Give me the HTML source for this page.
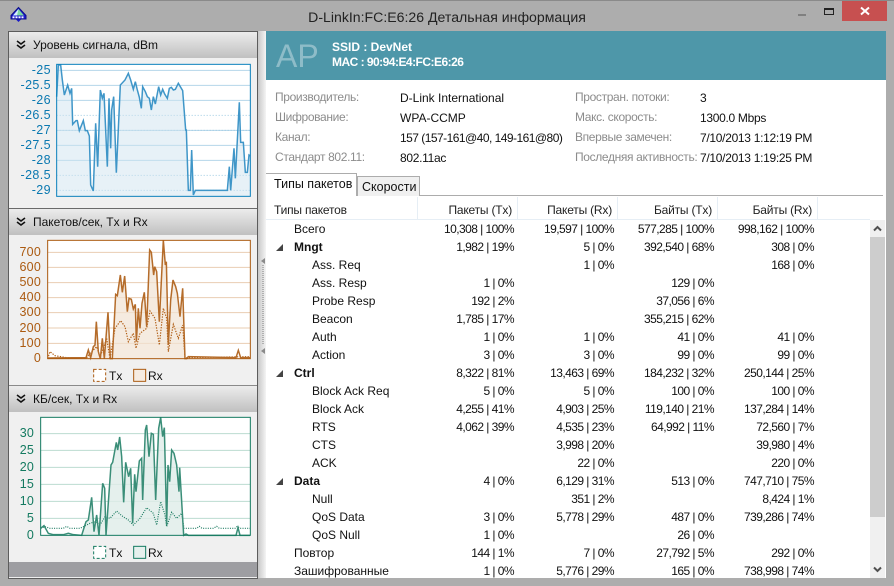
<!DOCTYPE html>
<html><head><meta charset="utf-8"><style>
html,body{margin:0;padding:0}
body{width:894px;height:586px;position:relative;overflow:hidden;background:#adadad;font:12px "Liberation Sans","DejaVu Sans",sans-serif;color:#111}
.a{position:absolute;white-space:nowrap}
.hd{position:absolute;left:9px;width:248px;height:26px;background:linear-gradient(#ececec,#c0c0c0)}
.hd span{position:absolute;left:24px;top:6px;font-size:12px;color:#111;white-space:nowrap}
.hd svg{position:absolute;left:7px;top:8px}
.lab{color:#8c8c8c;position:absolute;white-space:nowrap;font-size:12px;letter-spacing:-.35px}
.val{color:#111;position:absolute;white-space:nowrap;font-size:12px}
.row{position:absolute;left:266px;width:604px;height:18px;line-height:18px}
.row i{font-style:normal;position:absolute;top:0;white-space:nowrap}
.n0{left:28px}.n1{left:46px}.b{font-weight:bold}
.t1,.t2,.t3,.t4{letter-spacing:-.55px;width:120px;text-align:right}
.t1{left:128px}
.t2{left:228px}
.t3{left:328px}
.t4{left:428px}
.tri{position:absolute;left:10px;top:6px;width:0;height:0;border-left:7px solid transparent;border-bottom:7px solid #444}
.th{position:absolute;top:203px;white-space:nowrap;color:#222;letter-spacing:-.2px}
.sep{position:absolute;top:197px;width:1px;height:22px;background:#e6eef5}
</style></head><body>
<div class="a" style="left:0;top:0;width:894px;height:1px;background:#8a8a8a"></div>
<svg class="a" style="left:9px;top:6px" width="19" height="18" viewBox="0 0 19 18"><path d="M9.500 1.500L17 9.500V13H2V9.500Z" fill="#1a1ad0" stroke="#10108a" stroke-width="1"/><path d="M9.500 3L15 9.500H4Z" fill="#7fd8a0"/><path d="M9.500 3L4 9.500H8Z" fill="#d8ecff"/><path d="M3.500 11.300h12" stroke="#fff" stroke-width="1.800" stroke-dasharray="2 1"/><path d="M7 13.500h5l-2.500 2.500z" fill="#1a1ac8"/></svg>
<div class="a" style="left:0;top:8px;width:894px;text-align:center;font-size:14.100px;color:#222;line-height:18px">D-LinkIn:FC:E6:26 Детальная информация</div>
<div class="a" style="left:798px;top:14px;width:8px;height:2px;background:#808080"></div>
<div class="a" style="left:824px;top:8px;width:8px;height:4px;border:1.500px solid #222;border-top-width:2.500px"></div>
<div class="a" style="left:842px;top:1px;width:45px;height:20px;background:#c75050"></div>
<svg class="a" style="left:860px;top:6px" width="10" height="10"><path d="M1 1.500L9 8.500M9 1.500L1 8.500" stroke="#fff" stroke-width="2"/></svg>

<!-- left panel -->
<div class="a" style="left:8px;top:31px;width:248px;height:546px;border:1px solid #5c5c5c;background:#f0f0f0"></div>
<div class="a" style="left:9px;top:562px;width:248px;height:15px;background:#9e9ea2"></div>
<div class="a" style="left:9px;top:208px;width:248px;height:1px;background:#6a6a6a"></div>
<div class="a" style="left:9px;top:385px;width:248px;height:1px;background:#8a8a8a"></div>
<div class="hd" style="top:32px"><svg width="10" height="11"><path d="M1 1l4 3 4-3M1 5l4 3 4-3" fill="none" stroke="#111" stroke-width="1.600"/></svg><span>Уровень сигнала, dBm</span></div>
<div class="hd" style="top:209px"><svg width="10" height="11"><path d="M1 1l4 3 4-3M1 5l4 3 4-3" fill="none" stroke="#111" stroke-width="1.600"/></svg><span>Пакетов/сек, Tx и Rx</span></div>
<div class="hd" style="top:386px"><svg width="10" height="11"><path d="M1 1l4 3 4-3M1 5l4 3 4-3" fill="none" stroke="#111" stroke-width="1.600"/></svg><span>КБ/сек, Tx и Rx</span></div>

<!-- chart 1 -->
<svg class="a" style="left:0;top:0" width="270" height="210" viewBox="0 0 810 630">
<rect x="170" y="193" width="581" height="396" fill="#fff"/>
<g stroke="#b5d6ea" stroke-width="3"><path d="M170 211H751M170 256H751M170 301H751M170 391H751M170 436H751M170 481H751"/></g>
<g stroke="#9cc9e2" stroke-width="3" stroke-dasharray="3 6"><path d="M170 346H751M170 391H751M170 526H751M170 571H751"/></g>
<path d="M170 589V290L175 195L182 195L187 240L193 285L203 255L210 280L215 265L218 373L228 362L232 362L238 392L250 362L256 392L262 392L268 408L272 555L279 571L280 571L287 370L293 500L301 270L307 295L312 280L322 500L327 295L332 445L335 330L341 290L349 518L361 255L375 240L385 220L392 240L400 268L406 245L412 270L418 292L424 325L428 260L436 275L442 290L448 295L454 330L460 290L466 312L476 260L482 285L488 268L494 282L502 295L508 265L514 262L520 270L526 268L535 250L548 272L557 390L559 390L565 571L571 571L575 450L580 585L586 571L682 571L688 500L692 571L702 445L706 535L718 307L722 427L730 427L736 517L742 517L747 465L751 468V589Z" fill="#cfe3f0" fill-opacity=".5"/>
<path d="M170 290L175 195L182 195L187 240L193 285L203 255L210 280L215 265L218 373L228 362L232 362L238 392L250 362L256 392L262 392L268 408L272 555L279 571L280 571L287 370L293 500L301 270L307 295L312 280L322 500L327 295L332 445L335 330L341 290L349 518L361 255L375 240L385 220L392 240L400 268L406 245L412 270L418 292L424 325L428 260L436 275L442 290L448 295L454 330L460 290L466 312L476 260L482 285L488 268L494 282L502 295L508 265L514 262L520 270L526 268L535 250L548 272L557 390L559 390L565 571L571 571L575 450L580 585L586 571L682 571L688 500L692 571L702 445L706 535L718 307L722 427L730 427L736 517L742 517L747 465L751 468" fill="none" stroke="#3f96c8" stroke-width="4.500"/>
<rect x="170" y="193" width="581" height="396" fill="none" stroke="#0a80bc" stroke-width="3"/>
</svg>
<div class="a" style="left:0;top:0;color:#0a78b0;font-size:12.500px;line-height:15px;letter-spacing:.4px">
<div class="a" style="right:-51px;top:63px;text-align:right">-25</div>
<div class="a" style="right:-51px;top:78px">-25.5</div>
<div class="a" style="right:-51px;top:93px">-26</div>
<div class="a" style="right:-51px;top:108px">-26.5</div>
<div class="a" style="right:-51px;top:123px">-27</div>
<div class="a" style="right:-51px;top:138px">-27.5</div>
<div class="a" style="right:-51px;top:153px">-28</div>
<div class="a" style="right:-51px;top:168px">-28.5</div>
<div class="a" style="right:-51px;top:183px">-29</div>
</div>

<!-- chart 2 -->
<svg class="a" style="left:0;top:205px" width="270" height="190" viewBox="0 0 810 570">
<rect x="143" y="106" width="608" height="355" fill="#fff"/>
<g stroke="#e9cdb2" stroke-width="3"><path d="M143 142H751M143 187H751M143 233H751M143 278H751M143 323H751M143 369H751M143 415H751"/></g>
<path d="M143 461L258 458L265 435L272 458L280 425L285 420L289 350L295 440L301 461L307 400L313 461L324 322L331 461L337 461L347 268L352 272L361 210L367 262L374 213L382 320L387 280L394 283L400 312L406 298L409 410L415 310L420 370L426 295L433 262L440 365L449 135L454 142L461 210L464 185L470 200L478 350L490 106L496 180L499 170L505 420L512 285L519 225L527 245L532 265L540 335L548 250L555 461Z" fill="#f1e2d3" fill-opacity=".7"/>
<path d="M143 461L150 440L165 452L200 458L240 458L260 458L270 445L290 425L300 455L310 430L320 400L330 461L345 370L362 347L375 365L385 410L400 385L408 430L420 385L440 370L450 318L465 340L478 420L490 310L500 340L505 440L520 358L535 400L548 360L555 458L750 455" fill="none" stroke="#b05c12" stroke-width="3.500" stroke-dasharray="4 4"/>
<path d="M143 459L258 458L265 435L272 458L280 425L285 420L289 350L295 440L301 461L307 400L313 461L324 322L331 461L337 461L347 268L352 272L361 210L367 262L374 213L382 320L387 280L394 283L400 312L406 298L409 410L415 310L420 370L426 295L433 262L440 365L449 135L454 142L461 210L464 185L470 200L478 350L490 106L496 180L499 170L505 420L512 285L519 225L527 245L532 265L540 335L548 250L555 461L560 461L565 455L708 458L715 436L722 458L750 458" fill="none" stroke="#b56c2a" stroke-width="4.500"/>
<rect x="143" y="106" width="608" height="355" fill="none" stroke="#ab5a10" stroke-width="3"/>
<rect x="281" y="493" width="36" height="36" fill="#fff" stroke="#ab5a10" stroke-width="3" stroke-dasharray="9 6"/>
<rect x="401" y="493" width="36" height="36" fill="#f6ece2" stroke="#ab5a10" stroke-width="3"/>
</svg>
<div class="a" style="left:0;top:0;color:#ab5a10;font-size:12.500px;line-height:15px;letter-spacing:.2px">
<div class="a" style="right:-41px;top:245px">700</div>
<div class="a" style="right:-41px;top:260px">600</div>
<div class="a" style="right:-41px;top:275px">500</div>
<div class="a" style="right:-41px;top:290px">400</div>
<div class="a" style="right:-41px;top:305px">300</div>
<div class="a" style="right:-41px;top:321px">200</div>
<div class="a" style="right:-41px;top:336px">100</div>
<div class="a" style="right:-41px;top:351px">0</div>
</div>
<div class="a" style="left:109px;top:369px;line-height:15px">Tx</div>
<div class="a" style="left:148px;top:369px;line-height:15px">Rx</div>

<!-- chart 3 -->
<svg class="a" style="left:0;top:385px" width="270" height="201" viewBox="0 0 810 603">
<rect x="122" y="97" width="629" height="354" fill="#fff"/>
<g stroke="#bcdbd1" stroke-width="3"><path d="M122 146H751M122 196H751M122 247H751M122 298H751M122 349H751M122 400H751"/></g>
<path d="M122 451L245 451L250 435L258 410L265 405L275 337L282 440L290 390L297 451L308 295L314 310L318 451L333 240L338 232L349 172L353 195L359 156L365 215L371 352L377 232L386 275L392 250L398 415L404 268L408 320L418 228L425 220L428 345L436 135L440 120L447 215L454 145L460 148L467 345L476 130L482 97L488 155L493 128L500 420L504 240L509 290L515 195L522 205L530 240L537 320L539 248L551 451Z" fill="#dfecE8" fill-opacity=".8"/>
<path d="M122 430L135 425L150 430L190 430L200 424L210 430L240 430L270 415L285 410L300 420L315 395L330 400L350 378L365 392L385 405L400 420L420 400L440 368L460 385L470 420L482 350L495 390L500 425L515 382L530 400L545 385L552 430L590 430L598 424L606 430L640 430L650 424L658 430L705 430L712 424L720 430L750 430" fill="none" stroke="#1a7a60" stroke-width="3.500" stroke-dasharray="3 4"/>
<path d="M122 430L132 422L145 445L160 449L190 449L205 445L220 449L245 451L250 435L258 410L265 405L275 337L282 440L290 390L297 451L308 295L314 310L318 451L333 240L338 232L349 172L353 195L359 156L365 215L371 352L377 232L386 275L392 250L398 415L404 268L408 320L418 228L425 220L428 345L436 135L440 120L447 215L454 145L460 148L467 345L476 130L482 97L488 155L493 128L500 420L504 240L509 290L515 195L522 205L530 240L537 320L539 248L551 451L558 447L565 451L708 451L714 428L720 451L750 451" fill="none" stroke="#3a8e78" stroke-width="4.500"/>
<rect x="122" y="97" width="629" height="354" fill="none" stroke="#147a60" stroke-width="3"/>
<rect x="281" y="484" width="36" height="36" fill="#fff" stroke="#147a60" stroke-width="3" stroke-dasharray="9 6"/>
<rect x="401" y="484" width="36" height="36" fill="#e6f0ed" stroke="#147a60" stroke-width="3"/>
</svg>
<div class="a" style="left:0;top:0;color:#147a60;font-size:12.500px;line-height:15px;letter-spacing:.2px">
<div class="a" style="right:-34px;top:426px">30</div>
<div class="a" style="right:-34px;top:443px">25</div>
<div class="a" style="right:-34px;top:460px">20</div>
<div class="a" style="right:-34px;top:477px">15</div>
<div class="a" style="right:-34px;top:494px">10</div>
<div class="a" style="right:-34px;top:511px">5</div>
<div class="a" style="right:-34px;top:528px">0</div>
</div>
<div class="a" style="left:109px;top:546px;line-height:15px">Tx</div>
<div class="a" style="left:148px;top:546px;line-height:15px">Rx</div>

<!-- splitter -->
<div class="a" style="left:258px;top:31px;width:8px;height:547px;background:linear-gradient(90deg,#c8c8c8,#f4f4f4)"></div>
<div class="a" style="left:261px;top:258px;width:0;height:0;border-top:3px solid transparent;border-bottom:3px solid transparent;border-right:4px solid #8a8a8a"></div>
<div class="a" style="left:261px;top:348px;width:0;height:0;border-top:3px solid transparent;border-bottom:3px solid transparent;border-right:4px solid #8a8a8a"></div>
<div class="a" style="left:262px;top:265px;width:2px;height:80px;background:repeating-linear-gradient(#b0b0b0 0 1px,transparent 1px 2px)"></div>

<!-- right panel -->
<div class="a" style="left:266px;top:31px;width:620px;height:547px;background:#fff"></div>
<div class="a" style="left:266px;top:31px;width:620px;height:49px;background:#4e97a9"></div>
<div class="a" style="left:276px;top:34px;font-size:32px;line-height:44px;color:#8ebcc8">AP</div>
<div class="a" style="left:332px;top:40px;font-size:12px;font-weight:bold;color:#fff;line-height:15px">SSID : DevNet</div>
<div class="a" style="left:332px;top:55px;font-size:12px;font-weight:bold;color:#fff;line-height:15px;letter-spacing:-.52px">MAC : 90:94:E4:FC:E6:26</div>

<div class="lab" style="left:275px;top:90px">Производитель:</div><div class="val" style="left:400px;top:91px">D-Link International</div>
<div class="lab" style="left:275px;top:110px">Шифрование:</div><div class="val" style="left:400px;top:111px">WPA-CCMP</div>
<div class="lab" style="left:275px;top:130px">Канал:</div><div class="val" style="left:400px;top:131px;letter-spacing:-.53px">157 (157-161@40, 149-161@80)</div>
<div class="lab" style="left:275px;top:150px">Стандарт 802.11:</div><div class="val" style="left:400px;top:151px;letter-spacing:-.3px">802.11ac</div>
<div class="lab" style="left:575px;top:90px">Простран. потоки:</div><div class="val" style="left:700px;top:91px">3</div>
<div class="lab" style="left:575px;top:110px">Макс. скорость:</div><div class="val" style="left:700px;top:111px;letter-spacing:-.3px">1300.0 Mbps</div>
<div class="lab" style="left:575px;top:130px">Впервые замечен:</div><div class="val" style="left:700px;top:131px;letter-spacing:-.3px">7/10/2013 1:12:19 PM</div>
<div class="lab" style="left:575px;top:150px">Последняя активность:</div><div class="val" style="left:700px;top:151px;letter-spacing:-.3px">7/10/2013 1:19:25 PM</div>

<!-- tabs -->
<div class="a" style="left:266px;top:195px;width:617px;height:1px;background:#acacac"></div>
<div class="a" style="left:357px;top:176px;width:61px;height:19px;background:#f0f0f0;border:1px solid #acacac;border-bottom:0;box-sizing:content-box"></div>
<div class="a" style="left:362px;top:179px;line-height:16px;font-size:12.500px">Скорости</div>
<div class="a" style="left:266px;top:173px;width:91px;height:23px;background:#fff;border:1px solid #acacac;border-bottom:0;border-left:0;box-sizing:border-box"></div>
<div class="a" style="left:274px;top:176px;line-height:16px;font-size:12.500px">Типы пакетов</div>

<!-- table header -->
<div class="th" style="left:274px">Типы пакетов</div>
<div class="th" style="left:392px;width:120px;text-align:right">Пакеты (Tx)</div>
<div class="th" style="left:492px;width:120px;text-align:right">Пакеты (Rx)</div>
<div class="th" style="left:592px;width:120px;text-align:right">Байты (Tx)</div>
<div class="th" style="left:692px;width:120px;text-align:right">Байты (Rx)</div>
<div class="sep" style="left:417px"></div><div class="sep" style="left:517px"></div><div class="sep" style="left:617px"></div><div class="sep" style="left:717px"></div><div class="sep" style="left:817px"></div>
<div class="a" style="left:266px;top:219px;width:604px;height:1px;background:#e6eef5"></div>

<!-- rows -->
<div class="row" style="top:220px"><i class="n0">Всего</i><i class="t1">10,308 | 100%</i><i class="t2">19,597 | 100%</i><i class="t3">577,285 | 100%</i><i class="t4">998,162 | 100%</i></div>
<div class="row" style="top:238px"><span class="tri"></span><i class="n0 b">Mngt</i><i class="t1">1,982 | 19%</i><i class="t2">5 | 0%</i><i class="t3">392,540 | 68%</i><i class="t4">308 | 0%</i></div>
<div class="row" style="top:256px"><i class="n1">Ass. Req</i><i class="t2">1 | 0%</i><i class="t4">168 | 0%</i></div>
<div class="row" style="top:274px"><i class="n1">Ass. Resp</i><i class="t1">1 | 0%</i><i class="t3">129 | 0%</i></div>
<div class="row" style="top:292px"><i class="n1">Probe Resp</i><i class="t1">192 | 2%</i><i class="t3">37,056 | 6%</i></div>
<div class="row" style="top:310px"><i class="n1">Beacon</i><i class="t1">1,785 | 17%</i><i class="t3">355,215 | 62%</i></div>
<div class="row" style="top:328px"><i class="n1">Auth</i><i class="t1">1 | 0%</i><i class="t2">1 | 0%</i><i class="t3">41 | 0%</i><i class="t4">41 | 0%</i></div>
<div class="row" style="top:346px"><i class="n1">Action</i><i class="t1">3 | 0%</i><i class="t2">3 | 0%</i><i class="t3">99 | 0%</i><i class="t4">99 | 0%</i></div>
<div class="row" style="top:364px"><span class="tri"></span><i class="n0 b">Ctrl</i><i class="t1">8,322 | 81%</i><i class="t2">13,463 | 69%</i><i class="t3">184,232 | 32%</i><i class="t4">250,144 | 25%</i></div>
<div class="row" style="top:382px"><i class="n1">Block Ack Req</i><i class="t1">5 | 0%</i><i class="t2">5 | 0%</i><i class="t3">100 | 0%</i><i class="t4">100 | 0%</i></div>
<div class="row" style="top:400px"><i class="n1">Block Ack</i><i class="t1">4,255 | 41%</i><i class="t2">4,903 | 25%</i><i class="t3">119,140 | 21%</i><i class="t4">137,284 | 14%</i></div>
<div class="row" style="top:418px"><i class="n1">RTS</i><i class="t1">4,062 | 39%</i><i class="t2">4,535 | 23%</i><i class="t3">64,992 | 11%</i><i class="t4">72,560 | 7%</i></div>
<div class="row" style="top:436px"><i class="n1">CTS</i><i class="t2">3,998 | 20%</i><i class="t4">39,980 | 4%</i></div>
<div class="row" style="top:454px"><i class="n1">ACK</i><i class="t2">22 | 0%</i><i class="t4">220 | 0%</i></div>
<div class="row" style="top:472px"><span class="tri"></span><i class="n0 b">Data</i><i class="t1">4 | 0%</i><i class="t2">6,129 | 31%</i><i class="t3">513 | 0%</i><i class="t4">747,710 | 75%</i></div>
<div class="row" style="top:490px"><i class="n1">Null</i><i class="t2">351 | 2%</i><i class="t4">8,424 | 1%</i></div>
<div class="row" style="top:508px"><i class="n1">QoS Data</i><i class="t1">3 | 0%</i><i class="t2">5,778 | 29%</i><i class="t3">487 | 0%</i><i class="t4">739,286 | 74%</i></div>
<div class="row" style="top:526px"><i class="n1">QoS Null</i><i class="t1">1 | 0%</i><i class="t3">26 | 0%</i></div>
<div class="row" style="top:544px"><i class="n0">Повтор</i><i class="t1">144 | 1%</i><i class="t2">7 | 0%</i><i class="t3">27,792 | 5%</i><i class="t4">292 | 0%</i></div>
<div class="row" style="top:562px"><i class="n0">Зашифрованные</i><i class="t1">1 | 0%</i><i class="t2">5,776 | 29%</i><i class="t3">165 | 0%</i><i class="t4">738,998 | 74%</i></div>

<!-- scrollbar -->
<div class="a" style="left:870px;top:220px;width:15px;height:358px;background:#f0f0f0"></div>
<div class="a" style="left:870px;top:237px;width:15px;height:280px;background:#cdcdcd"></div>
<svg class="a" style="left:873px;top:225px" width="9" height="7"><path d="M1 5.500L4.500 2L8 5.500" fill="none" stroke="#505050" stroke-width="2"/></svg>
<svg class="a" style="left:873px;top:566px" width="9" height="7"><path d="M1 1.500L4.500 5L8 1.500" fill="none" stroke="#505050" stroke-width="2"/></svg>
</body></html>
